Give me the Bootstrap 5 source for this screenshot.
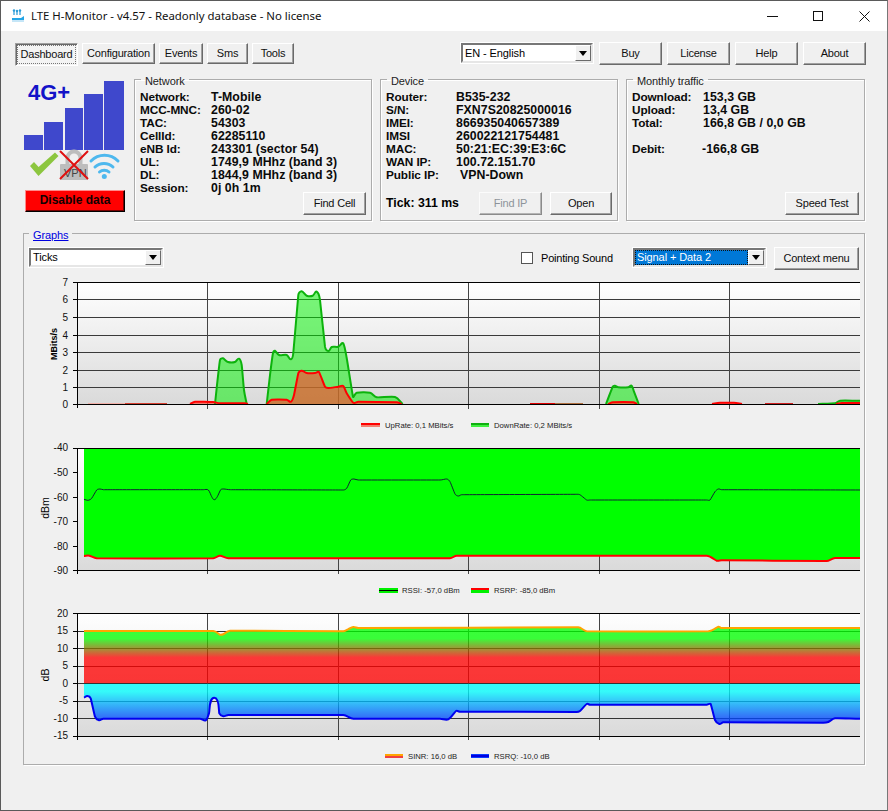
<!DOCTYPE html>
<html lang="en">
<head>
<meta charset="utf-8">
<title>LTE H-Monitor</title>
<link rel="stylesheet" href="https://cdn.jsdelivr.net/npm/bootstrap@5.3.0/dist/css/bootstrap.min.css">
<style>
html,body{margin:0;height:811px;overflow:hidden;background:#f0f0f0}
body{font-family:"Liberation Sans",Arial,sans-serif;font-size:11px;color:#000}
.appwin{width:888px;height:811px;background:#f0f0f0;border:1px solid #5a5a5a;border-right-color:#777}
.titlebar{height:30px;background:#fff;padding-left:10px}
.titletext{font-family:"Noto Sans","Liberation Sans",sans-serif;font-size:11.4px;margin-left:7px;color:#111}
.wctl{width:46px;height:30px}
.toolbar{padding:12px 21px 0 14px;height:40px}
.winbtn.btn{--bs-btn-padding-x:0;--bs-btn-padding-y:0;--bs-btn-font-size:11px;--bs-btn-line-height:1;--bs-btn-border-radius:0;
 font-family:"Liberation Sans",sans-serif;background:#f0f0f0;color:#111;letter-spacing:-.2px;border:1px solid;border-color:#fff #6a6a6a #6a6a6a #fff;box-shadow:inset -1px -1px 0 #a0a0a0;display:inline-flex;align-items:center;justify-content:center}
.tabw{height:21px}
.tabon.btn{border-color:#a0a0a0 #fff #fff #a0a0a0;box-shadow:inset 1px 1px 0 #696969;background:#f4f4f4;outline:1px dotted #777;outline-offset:-3px}
.w63{width:63px;height:23px}
.w62{width:62px;height:23px}
.w73{width:73px}.w44{width:44px}.w41{width:41px}.w42{width:42px}
.btnset{gap:5px;margin:-1px 0 0 6px}
.winsel{background:#fff;border:2px solid;border-color:#777 #e6e6e6 #e6e6e6 #777;box-shadow:0 0 0 1px #fff;font-size:11px;letter-spacing:-.1px;padding-left:2px}
.sel-en{width:132px;height:20px}
.selarrow{width:16px;height:100%;border:1px solid;border-color:#fff #6a6a6a #6a6a6a #fff;background:#f0f0f0;margin-left:auto}
.selarrow::after{content:"";border:4px solid transparent;border-top:5px solid #000;border-bottom:0}
.panels{padding-left:23px;height:153px}
.iconcol{width:110px;padding-top:10px}
.reddata{width:100px;height:22px;margin:9px 0 0 1px;background:#f00;border:1px solid;border-color:#ff8a8a #000 #000 #ff8a8a;box-shadow:inset -1px -1px 0 #700;font-weight:700;font-size:12px;line-height:19px;text-align:center;color:#100}
.groupbox{min-width:0;width:238px;height:150px;margin:0 8px 0 0;padding:0 5px;border:1px solid #acacac;box-shadow:1px 1px 0 #fff, inset 1px 1px 0 #fff;position:relative}
.groupbox.lastbox{width:239px;margin-right:0}
.groupbox legend{float:none;width:auto;margin:0 0 0 1px;padding:4px 4px 0;font-size:11px;line-height:13px;color:#222;letter-spacing:-.1px}
.kvgrid{display:grid;grid-template-columns:71px auto;font-weight:700;font-size:12.3px;line-height:13px;padding-top:3px;color:#0a0a0a;letter-spacing:.05px}
.kvdev{grid-template-columns:70px auto}
.kvgrid span:nth-child(odd){font-size:11.8px;letter-spacing:-.1px}
.shift4{margin-left:4px}.shiftm{margin-left:-1px}
.panelfoot{position:absolute;left:5px;right:5px;bottom:5px;height:23px;font-weight:700;font-size:12.3px}
.graphbox{width:842px;height:541px;margin:0 0 0 22px;padding:0;border:1px solid #acacac;box-shadow:1px 1px 0 #fff}
.graphbox legend{float:none;width:auto;margin:0 0 0 5px;padding:4px 4px 0;font-size:11px;line-height:14px;letter-spacing:-.1px}
.graphbox legend a{color:#0000e0}
.ctlrow{height:30px;padding:5px 5px 0 5px}
.ctlrow .sel1{width:134px;height:19px;margin-top:1px}
.ctlrow .sel2{width:133px;height:19px;margin-top:1px;padding-left:0}
.selhi{background:#0078d7;color:#fff;flex:1;height:100%;outline:1px dotted #111;outline-offset:-1px;padding-left:2px;line-height:14px}
.pcheck{margin:3px 0 0 358px;display:flex;align-items:center}
.pcheck input.form-check-input{width:12px;height:12px;margin:0 8px 0 0;border:1px solid #555;border-radius:0;background-color:#fff}
.pcheck span{font-size:11px;letter-spacing:-.2px}
.ctxbtn{width:85px;height:23px}
.spdbtn{width:74px;height:23px}
.chartsvg{display:block;width:840px}
.crisp{shape-rendering:crispEdges}
.axtxt{font:10px "Liberation Sans",sans-serif;fill:#111}
.legtxt{font:7.7px "Liberation Sans",sans-serif;fill:#222}
.ytitle{font:10.5px "Liberation Sans",sans-serif;fill:#000}
.ytitleb{font:700 9px "Liberation Sans",sans-serif;fill:#000}
</style>
</head>
<body>
<div class="appwin d-flex flex-column">
  <div class="titlebar d-flex align-items-center">
    <svg width="13" height="14" viewBox="0 0 13 14"><path d="M3 1v5M6 2v4M9 1v5" stroke="#2a9bd8" stroke-width="1.2" fill="none"/><circle cx="3" cy="1.5" r="1.2" fill="#2a9bd8"/><circle cx="6" cy="2" r="1.2" fill="#2a9bd8"/><circle cx="9" cy="1.5" r="1.2" fill="#2a9bd8"/><path d="M1 9h9l3-2v4H1z" fill="#24a5e6"/><path d="M1 12h12" stroke="#8ccdf0"/></svg>
    <span class="titletext">LTE H-Monitor - v4.57 - Readonly database - No license</span>
    <div class="d-flex ms-auto">
      <div class="wctl d-flex align-items-center justify-content-center"><svg width="11" height="11" viewBox="0 0 11 11"><path d="M0 5.5h11" stroke="#111"/></svg></div>
      <div class="wctl d-flex align-items-center justify-content-center"><svg width="11" height="11" viewBox="0 0 11 11"><rect x=".5" y=".5" width="9" height="9" fill="none" stroke="#111"/></svg></div>
      <div class="wctl d-flex align-items-center justify-content-center"><svg width="11" height="11" viewBox="0 0 11 11"><path d="M.5.5l10 10M10.5.5l-10 10" stroke="#111"/></svg></div>
    </div>
  </div>

  <div class="toolbar d-flex align-items-start">
    <div class="d-flex gap-1 tabw">
      <button type="button" class="btn winbtn tabon tabw w63">Dashboard</button>
      <button type="button" class="btn winbtn tabw w73">Configuration</button>
      <button type="button" class="btn winbtn tabw w44">Events</button>
      <button type="button" class="btn winbtn tabw w41">Sms</button>
      <button type="button" class="btn winbtn tabw w42">Tools</button>
    </div>
    <div class="winsel sel-en d-flex align-items-center ms-auto">EN - English<span class="selarrow d-flex align-items-center justify-content-center"></span></div>
    <div class="d-flex btnset">
      <button type="button" class="btn winbtn w63">Buy</button>
      <button type="button" class="btn winbtn w63">License</button>
      <button type="button" class="btn winbtn w63">Help</button>
      <button type="button" class="btn winbtn w63">About</button>
    </div>
  </div>

  <div class="panels d-flex align-items-start">
    <div class="iconcol">
      <svg width="101" height="100" viewBox="24 81 101 100" class="d-block">
        <g fill="#3f48cc" class="crisp">
          <rect x="24" y="135" width="19" height="15"/><rect x="44" y="122" width="19" height="28"/><rect x="65" y="108" width="18" height="42"/><rect x="84" y="94" width="19" height="56"/><rect x="104" y="81" width="20" height="69"/>
        </g>
        <text x="28" y="100" font-family="Liberation Sans" font-weight="700" font-size="22" fill="#1212c8">4G+</text>
        <polygon points="30,166 34,162 38.6,167 55,152.5 58.5,156 38.5,176" fill="#8cc63f"/>
        <path d="M67.500 166v-8a6.500 6.500 0 0 1 13 0v8" fill="none" stroke="#bdbdbd" stroke-width="4"/>
        <rect x="60" y="164" width="28" height="16" rx="1" fill="#bdbdbd"/>
        <text x="64" y="177" font-family="Liberation Sans" font-size="11" fill="#444">VPN</text>
        <path d="M60 151l28 28M88 151l-28 28" stroke="#e01010" stroke-width="2"/>
        <g fill="none" stroke="#4db8ee" stroke-width="3" stroke-linecap="round">
          <path d="M91 161a19 19 0 0 1 27 0"/><path d="M95 167a13 13 0 0 1 18 0"/><path d="M99.500 172a7 7 0 0 1 9.500 0"/>
        </g>
        <circle cx="104.300" cy="176.500" r="2.500" fill="#4db8ee"/>
      </svg>
      <div class="reddata">Disable data</div>
    </div>

    <fieldset class="groupbox">
      <legend>Network</legend>
      <div class="kvgrid">
        <span>Network:</span><span>T-Mobile</span>
        <span>MCC-MNC:</span><span>260-02</span>
        <span>TAC:</span><span>54303</span>
        <span>CellId:</span><span>62285110</span>
        <span>eNB Id:</span><span>243301 (sector 54)</span>
        <span>UL:</span><span>1749,9 MHhz (band 3)</span>
        <span>DL:</span><span>1844,9 MHhz (band 3)</span>
        <span>Session:</span><span>0j 0h 1m</span>
      </div>
      <div class="panelfoot d-flex justify-content-end"><button type="button" class="btn winbtn w63">Find Cell</button></div>
    </fieldset>

    <fieldset class="groupbox">
      <legend>Device</legend>
      <div class="kvgrid kvdev">
        <span>Router:</span><span>B535-232</span>
        <span>S/N:</span><span>FXN7S20825000016</span>
        <span>IMEI:</span><span>866935040657389</span>
        <span>IMSI</span><span>260022121754481</span>
        <span>MAC:</span><span>50:21:EC:39:E3:6C</span>
        <span>WAN IP:</span><span>100.72.151.70</span>
        <span>Public IP:</span><span class="shift4">VPN-Down</span>
      </div>
      <div class="panelfoot d-flex align-items-center"><span>Tick: 311 ms</span>
        <button type="button" class="btn winbtn w63 ms-auto text-secondary me-2 opacity-75">Find IP</button><button type="button" class="btn winbtn w62">Open</button></div>
    </fieldset>

    <fieldset class="groupbox lastbox">
      <legend>Monthly traffic</legend>
      <div class="kvgrid">
        <span>Download:</span><span>153,3 GB</span>
        <span>Upload:</span><span>13,4 GB</span>
        <span>Total:</span><span>166,8 GB / 0,0 GB</span>
        <span>&nbsp;</span><span>&nbsp;</span>
        <span>Debit:</span><span class="shiftm">-166,8 GB</span>
      </div>
      <div class="panelfoot d-flex justify-content-end"><button type="button" class="btn winbtn spdbtn">Speed Test</button></div>
    </fieldset>
  </div>

  <fieldset class="graphbox">
    <legend><a href="#">Graphs</a></legend>
    <div class="ctlrow d-flex align-items-start">
      <div class="winsel sel1 d-flex align-items-center">Ticks<span class="selarrow d-flex align-items-center justify-content-center"></span></div>
      <div class="pcheck"><input class="form-check-input" type="checkbox" aria-label="Pointing Sound"><span>Pointing Sound</span></div>
      <div class="winsel sel2 d-flex align-items-center ms-auto"><span class="selhi">Signal + Data 2</span><span class="selarrow d-flex align-items-center justify-content-center"></span></div>
      <button type="button" class="btn winbtn ctxbtn ms-2">Context menu</button>
    </div>

    <svg class="chartsvg" width="840" height="164" viewBox="24 272 840 164">
      <defs>
        <linearGradient id="plotbg" x1="0" y1="0" x2="0" y2="1"><stop offset="0" stop-color="#fff"/><stop offset="1" stop-color="#dadada"/></linearGradient>
      </defs>
      <rect x="77" y="282" width="783" height="122" fill="url(#plotbg)"/>
      <path class="crisp" d="M77 299.500H860M77 317.500H860M77 335.500H860M77 352.500H860M77 370.500H860M77 387.500H860" stroke="#3a3a3a" fill="none"/>
      <path class="crisp" d="M207.500 282V409M338.500 282V409M468.500 282V409M599.500 282V409M729.500 282V409" stroke="#444" fill="none"/>
      <g id="c1"></g>
      <path class="crisp" d="M77.500 282V408M77 282.500H860M76 404.500H860M73 282.500H77M73 299.500H77M73 317.500H77M73 335.500H77M73 352.500H77M73 370.500H77M73 387.500H77M73 404.500H77" stroke="#000" fill="none"/>
      <g class="axtxt" text-anchor="end">
        <text x="68" y="286">7</text><text x="68" y="303">6</text><text x="68" y="321">5</text><text x="68" y="339">4</text><text x="68" y="356">3</text><text x="68" y="374">2</text><text x="68" y="391">1</text><text x="68" y="408">0</text>
      </g>
      <text class="ytitleb" transform="translate(56.500 344) rotate(-90)" text-anchor="middle">MBits/s</text>
      <rect class="crisp" x="361" y="423" width="19" height="2" fill="#f00"/><rect class="crisp" x="361" y="425" width="19" height="2" fill="#f08070"/>
      <text class="legtxt" x="385" y="428">UpRate: 0,1 MBits/s</text>
      <rect class="crisp" x="471" y="423" width="18" height="2" fill="#10b010"/><rect class="crisp" x="471" y="425" width="18" height="2" fill="#40f040"/>
      <text class="legtxt" x="494" y="428">DownRate: 0,2 MBits/s</text>
    </svg>

    <svg class="chartsvg" width="840" height="164" viewBox="24 436 840 164">
      <rect x="77" y="448" width="783" height="122" fill="url(#plotbg)"/>
      <path class="crisp" d="M207.500 548V574M338.500 548V574M468.500 548V574M599.500 548V574M729.500 548V574" stroke="#444" fill="none"/>
      <g id="c2"></g>
      <path class="crisp" d="M77.500 448V574M77 448.500H860M76 570.500H860M73 448.500H77M73 472.500H77M73 497.500H77M73 521.500H77M73 546.500H77M73 570.500H77" stroke="#000" fill="none"/>
      <g class="axtxt" text-anchor="end">
        <text x="68" y="451">-40</text><text x="68" y="476">-50</text><text x="68" y="501">-60</text><text x="68" y="525">-70</text><text x="68" y="550">-80</text><text x="68" y="574">-90</text>
      </g>
      <text class="ytitle" transform="translate(48.500 508) rotate(-90)" text-anchor="middle">dBm</text>
      <rect class="crisp" x="379" y="588" width="19" height="5" fill="#00f000"/><rect class="crisp" x="379" y="590" width="19" height="1" fill="#000"/>
      <text class="legtxt" x="402" y="593">RSSI: -57,0 dBm</text>
      <rect class="crisp" x="471" y="588" width="18" height="5" fill="#00f000"/><rect class="crisp" x="471" y="588" width="18" height="2" fill="#f00"/>
      <text class="legtxt" x="494" y="593">RSRP: -85,0 dBm</text>
    </svg>

    <svg class="chartsvg" width="840" height="164" viewBox="24 600 840 164">
      <defs>
        <linearGradient id="gradup" gradientUnits="userSpaceOnUse" x1="0" y1="630" x2="0" y2="683"><stop offset="0" stop-color="#0f0"/><stop offset=".16" stop-color="#0f0"/><stop offset=".52" stop-color="#f00"/><stop offset="1" stop-color="#f00"/></linearGradient>
        <linearGradient id="graddn" gradientUnits="userSpaceOnUse" x1="0" y1="684" x2="0" y2="722"><stop offset="0" stop-color="#0ff"/><stop offset=".2" stop-color="#0ff"/><stop offset="1" stop-color="#0030ff"/></linearGradient>
      </defs>
      <rect x="77" y="613" width="783" height="123" fill="url(#plotbg)"/>
      <path class="crisp" d="M77 631.500H860M77 648.500H860M77 666.500H860M77 683.500H860M77 701.500H860M77 718.500H860" stroke="#333" fill="none"/>
      <path class="crisp" d="M207.500 613V740M338.500 613V740M468.500 613V740M599.500 613V740M729.500 613V740" stroke="#444" fill="none"/>
      <g id="c3"></g>
      <path class="crisp" d="M77.500 613V740M77 613.500H860M76 736.500H860M73 613.500H77M73 631.500H77M73 648.500H77M73 666.500H77M73 683.500H77M73 701.500H77M73 718.500H77M73 736.500H77" stroke="#000" fill="none"/>
      <g class="axtxt" text-anchor="end">
        <text x="68" y="617">20</text><text x="68" y="634">15</text><text x="68" y="652">10</text><text x="68" y="669">5</text><text x="68" y="687">0</text><text x="68" y="704">-5</text><text x="68" y="722">-10</text><text x="68" y="739">-15</text>
      </g>
      <text class="ytitle" transform="translate(48.500 675) rotate(-90)" text-anchor="middle">dB</text>
      <rect class="crisp" x="385" y="754" width="18" height="2" fill="#ffa500"/><rect class="crisp" x="385" y="756" width="18" height="2" fill="#f04040"/>
      <text class="legtxt" x="408" y="759">SINR: 16,0 dB</text>
      <rect class="crisp" x="471" y="754" width="18" height="4" fill="#0a3cff"/><rect class="crisp" x="471" y="755" width="18" height="2" fill="#0000e0"/>
      <text class="legtxt" x="494" y="759">RSRQ: -10,0 dB</text>
    </svg>
  </fieldset>
</div>

<script>
function P(s){return s.trim().split(/\s+/).map(function(q){return q.split(',').map(Number)})}
function smooth(p){
  var d='M'+p[0][0]+' '+p[0][1],n=p.length;
  function len(i){return (i<0||i>=n-1)?Infinity:Math.hypot(p[i+1][0]-p[i][0],p[i+1][1]-p[i][1])}
  function tan(i){var a=p[Math.max(i-1,0)],b=p[Math.min(i+1,n-1)],x=b[0]-a[0],y=b[1]-a[1],l=Math.hypot(x,y)||1;return [x/l,y/l]}
  for(var i=0;i<n-1;i++){
    var l1=Math.min(len(i),len(i-1))/3,l2=Math.min(len(i),len(i+1))/3,t1=tan(i),t2=tan(i+1);
    d+='C'+(p[i][0]+t1[0]*l1).toFixed(1)+' '+(p[i][1]+t1[1]*l1).toFixed(1)+' '+(p[i+1][0]-t2[0]*l2).toFixed(1)+' '+(p[i+1][1]-t2[1]*l2).toFixed(1)+' '+p[i+1][0]+' '+p[i+1][1];
  }
  return d;
}
function add(g,d,fill,stroke,w,op){
  var e=document.createElementNS('http://www.w3.org/2000/svg','path');
  e.setAttribute('d',d);e.setAttribute('fill',fill||'none');
  if(stroke){e.setAttribute('stroke',stroke);e.setAttribute('stroke-width',w);e.setAttribute('stroke-linejoin','round')}
  if(op)e.setAttribute('opacity',op);
  document.getElementById(g).appendChild(e);
}
function area(g,p,base,fill,op){
  add(g,smooth(p)+'L'+p[p.length-1][0]+' '+base+'L'+p[0][0]+' '+base+'Z',fill,null,0,op);
}
var gr=[
 P('215,404 217,385 220,360 223,358.300 228,362 235,362 239,358.700 241.700,365 244,390 246.700,404'),
 P('266.700,404 270,375 273,353 275,350.700 279,355 286.700,355 291,359.300 293.300,353 298.300,295 301.700,291.300 306.700,295.700 312.700,295.700 316.700,291.700 320,300 325,346.700 328.300,351 331.700,347 338.300,346.700 343.300,343.300 346.700,358 353,396.700 356.700,392.700 370,392.700 376.700,397.300 395,397 402.700,404'),
 P('606,404 612.700,386.700 615,385.700 618.300,387.300 628.300,387.300 631.700,385.700 634,391.700 638.700,404'),
 P('818,404 835,403.300 840,400.700 860,400.700')];
var rd=[
 P('190,404 195,401.700 213,402 220,403.300 245,403.300 248,404'),
 P('266.700,404 271.700,399.700 286.700,399.700 291,401.700 294,395 298.300,373.300 301.700,370.700 306.700,373 315,373 319,372 325,386.700 328.300,388 338.300,386.700 343.300,386 346.700,393.300 353.300,402.700 358.300,401.700 396.700,402.300 401.700,404'),
 P('608,404 613,402.300 633,402.300 637,404'),
 P('712,404 720,402.800 734,402.800 742,404'),
 P('836,404 842,403 860,403')];
var faint=[P('88,403.500 125,403.500'),P('125,403.500 167,403.500'),P('530,403.500 555,403.500'),P('555,403.500 583,403.500'),P('765,403.500 793,403.500')];
gr.forEach(function(p){area('c1',p,404,'rgb(0,240,0)',.52)});
rd.forEach(function(p){area('c1',p,404,'rgb(255,70,50)',.65)});
gr.forEach(function(p){add('c1',smooth(p),'none','#0cb30c',2)});
rd.forEach(function(p){add('c1',smooth(p),'none','#f00',2)});
add('c1',smooth(faint[0]),'none','#f3b0a8',1);
add('c1',smooth(faint[1]),'none','#d84030',1);
add('c1',smooth(faint[2]),'none','#e00000',1);
add('c1',smooth(faint[3]),'none','#b07040',1);
add('c1',smooth(faint[4]),'none','#d02020',1);

var rsrp=P('84,556 89.300,555.700 96.700,558.300 213.300,558.300 220,555.700 228.300,558.300 450,558.300 456.700,555.700 706.700,555.700 716.700,560.700 721.700,560.300 823.300,561 828.300,560.700 835,558 860,558');
var rssi=P('84,499.300 88.300,500.300 91.700,498.300 96.700,490 100,489 103.300,489.700 203.300,489.700 208.300,490 211.700,496.700 214.300,499.700 217.300,496.700 220.700,489.700 224,489 230,489.700 343.300,490 346.700,488.300 350.700,480 354,479 358.300,480 440,480 446.700,479 450,481.700 455,494 458.300,496 461.700,494.700 578.300,494.300 581.700,496 586.700,500 590,500 706.700,500 710,500 715,491.700 718.300,489 721.700,489.700 860,490');
area('c2',rsrp,448,'#0f0');
add('c2',smooth(rsrp),'none','#f00',2);
add('c2',smooth(rssi),'none','#123',1);

var sinr=P('84,631 213.300,631 220,634.700 223.300,634.300 230,630.700 343.300,631.300 348,629.300 353.300,627 358.300,628 578.300,627.300 586.700,631.300 708.300,631.300 718.300,626.700 721.700,628 860,628');
var rsrq=P('84,697.700 87.300,696 90.700,698.300 95,716.700 99,720.300 103.300,718.700 200,718.700 205.700,720.300 209,713.300 214.300,697.700 219.300,713.300 223.300,716.300 228.300,715 343.300,715 353.300,718.700 440,718.700 448.300,719.300 456,711 460,711.700 576.700,712 580,711 586.700,704 590,704.700 706.700,704.700 710.700,704 715,720 719.300,724 723.300,722.300 823.300,722.700 828.300,722 835,718.300 860,718.700');
area('c3',sinr,683,'url(#gradup)',.77);
area('c3',rsrq,684,'url(#graddn)',.77);
add('c3',smooth(sinr),'none','#ffa500',2);
add('c3',smooth(rsrq),'none','#0000f0',2);
</script>
<script src="https://cdn.jsdelivr.net/npm/bootstrap@5.3.0/dist/js/bootstrap.bundle.min.js"></script>
</body>
</html>
